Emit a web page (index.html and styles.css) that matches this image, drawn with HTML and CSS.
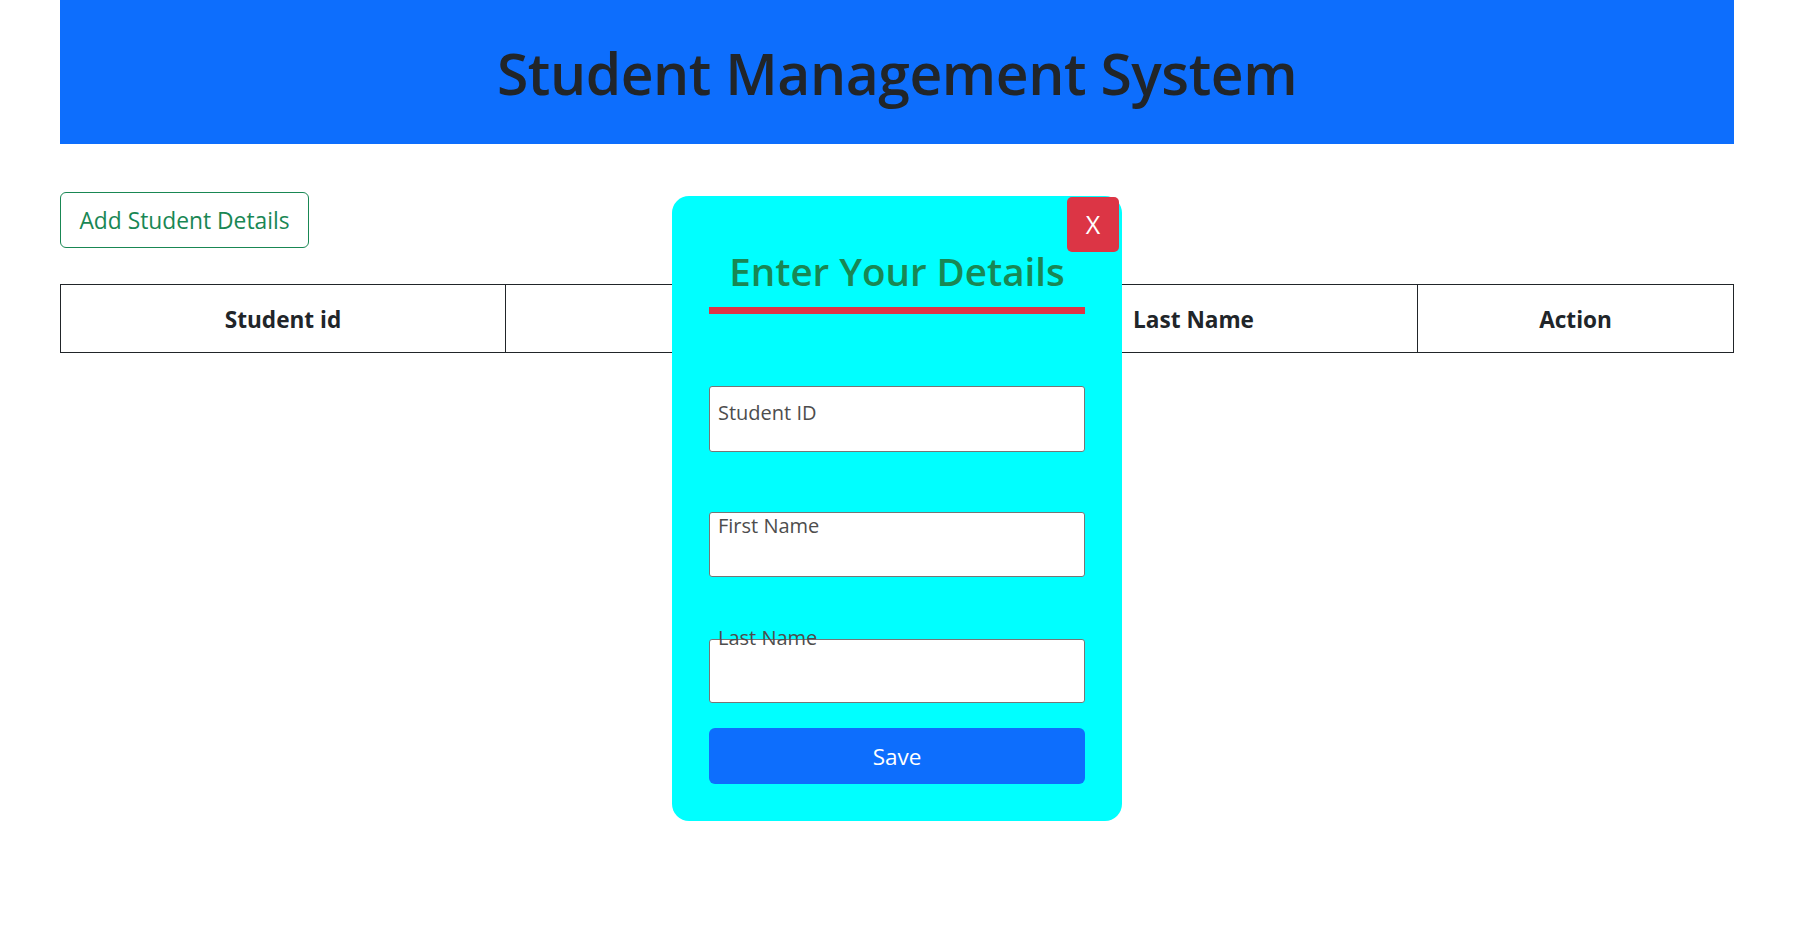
FILE: index.html
```html
<!DOCTYPE html>
<html lang="en">
<head>
<meta charset="utf-8">
<title>Student Management System</title>
<link rel="stylesheet" href="styles.css">
</head>
<body>
<div class="page">
  <header class="banner">
    <h1 class="title">Student Management System</h1>
  </header>
  <button class="btn-add" type="button">Add Student Details</button>
  <table class="students">
    <colgroup>
      <col class="c1"><col class="c2"><col class="c3"><col class="c4">
    </colgroup>
    <thead>
      <tr>
        <th>Student id</th>
        <th>First Name</th>
        <th>Last Name</th>
        <th>Action</th>
      </tr>
    </thead>
  </table>

  <div class="modal">
    <button class="btn-close" type="button">X</button>
    <h2 class="modal-title">Enter Your Details</h2>
    <div class="rule"></div>
    <div class="field f1">
      <input class="field-input" type="text">
      <label class="field-label">Student ID</label>
    </div>
    <div class="field f2">
      <input class="field-input" type="text">
      <label class="field-label">First Name</label>
    </div>
    <div class="field f3">
      <input class="field-input" type="text">
      <label class="field-label">Last Name</label>
    </div>
    <button class="btn-save" type="button">Save</button>
  </div>
</div>
</body>
</html>
```

FILE: styles.css
```css
* { box-sizing: border-box; }

html, body {
  margin: 0;
  padding: 0;
  background: #ffffff;
}

body {
  font-family: "Open Sans", "Noto Sans", "Liberation Sans", sans-serif;
  color: #212529;
}

.page {
  position: relative;
  width: 1674px;
  margin-left: 60px;
  min-height: 927px;
}

.banner {
  height: 144px;
  background: #0d6efd;
  padding-top: 2px;
  display: flex;
  justify-content: center;
}

.title {
  margin: 0;
  font-size: 57px;
  font-weight: 600;
  line-height: 142px;
  letter-spacing: -0.45px;
  color: #212529;
}

.btn-add {
  display: block;
  margin-top: 48px;
  width: 249px;
  height: 56px;
  padding: 1px 0 0;
  border: 1px solid #198754;
  border-radius: 6px;
  background: #ffffff;
  color: #198754;
  font-family: inherit;
  font-size: 22.8px;
  line-height: 53px;
  text-align: center;
}

.students {
  margin-top: 36px;
  width: 1673px;
  border-collapse: collapse;
  table-layout: fixed;
}

.c1 { width: 445px; }
.c2 { width: 464px; }
.c3 { width: 448px; }
.c4 { width: 316px; }

.students th {
  border: 1px solid #212529;
  height: 68px;
  padding: 1px 0 0;
  font-size: 22.6px;
  font-weight: 700;
  line-height: 65px;
  text-align: center;
  color: #212529;
}

.modal {
  position: absolute;
  left: 612px;
  top: 196px;
  width: 450px;
  height: 625px;
  padding: 0 37px;
  background: #00ffff;
  border-radius: 17px;
  display: flex;
  flex-direction: column;
}

.btn-close {
  position: absolute;
  top: 1px;
  right: 3px;
  width: 52px;
  height: 55px;
  padding: 0;
  border: none;
  border-radius: 5px;
  background: #dc3545;
  color: #ffffff;
  font-family: inherit;
  font-size: 25px;
  line-height: 55px;
  text-align: center;
}

.modal-title {
  margin: 51px 0 0;
  height: 48px;
  font-size: 38.5px;
  font-weight: 600;
  line-height: 48px;
  text-align: center;
  color: #198754;
  white-space: nowrap;
}

.rule {
  margin-top: 12px;
  height: 7px;
  background: #dc3545;
}

.field {
  position: relative;
}

.f1 { margin-top: 72px; height: 66px; }
.f2 { margin-top: 60px; height: 65px; }
.f3 { margin-top: 62px; height: 64px; }

.field-input {
  display: block;
  width: 100%;
  height: 100%;
  margin: 0;
  border: 1px solid #767676;
  border-radius: 3px;
  background: #ffffff;
}

.field-label {
  position: absolute;
  left: 9px;
  font-size: 20px;
  line-height: 24px;
  color: #4d4d4d;
  white-space: nowrap;
}

.f1 .field-label { top: 15px; }
.f2 .field-label { top: 2px; }
.f3 .field-label { top: -13px; }

.btn-save {
  margin-top: 25px;
  height: 56px;
  padding: 2px 0 0;
  border: none;
  border-radius: 6px;
  background: #0d6efd;
  color: #ffffff;
  font-family: inherit;
  font-size: 22.5px;
  line-height: 54px;
  text-align: center;
}
```
